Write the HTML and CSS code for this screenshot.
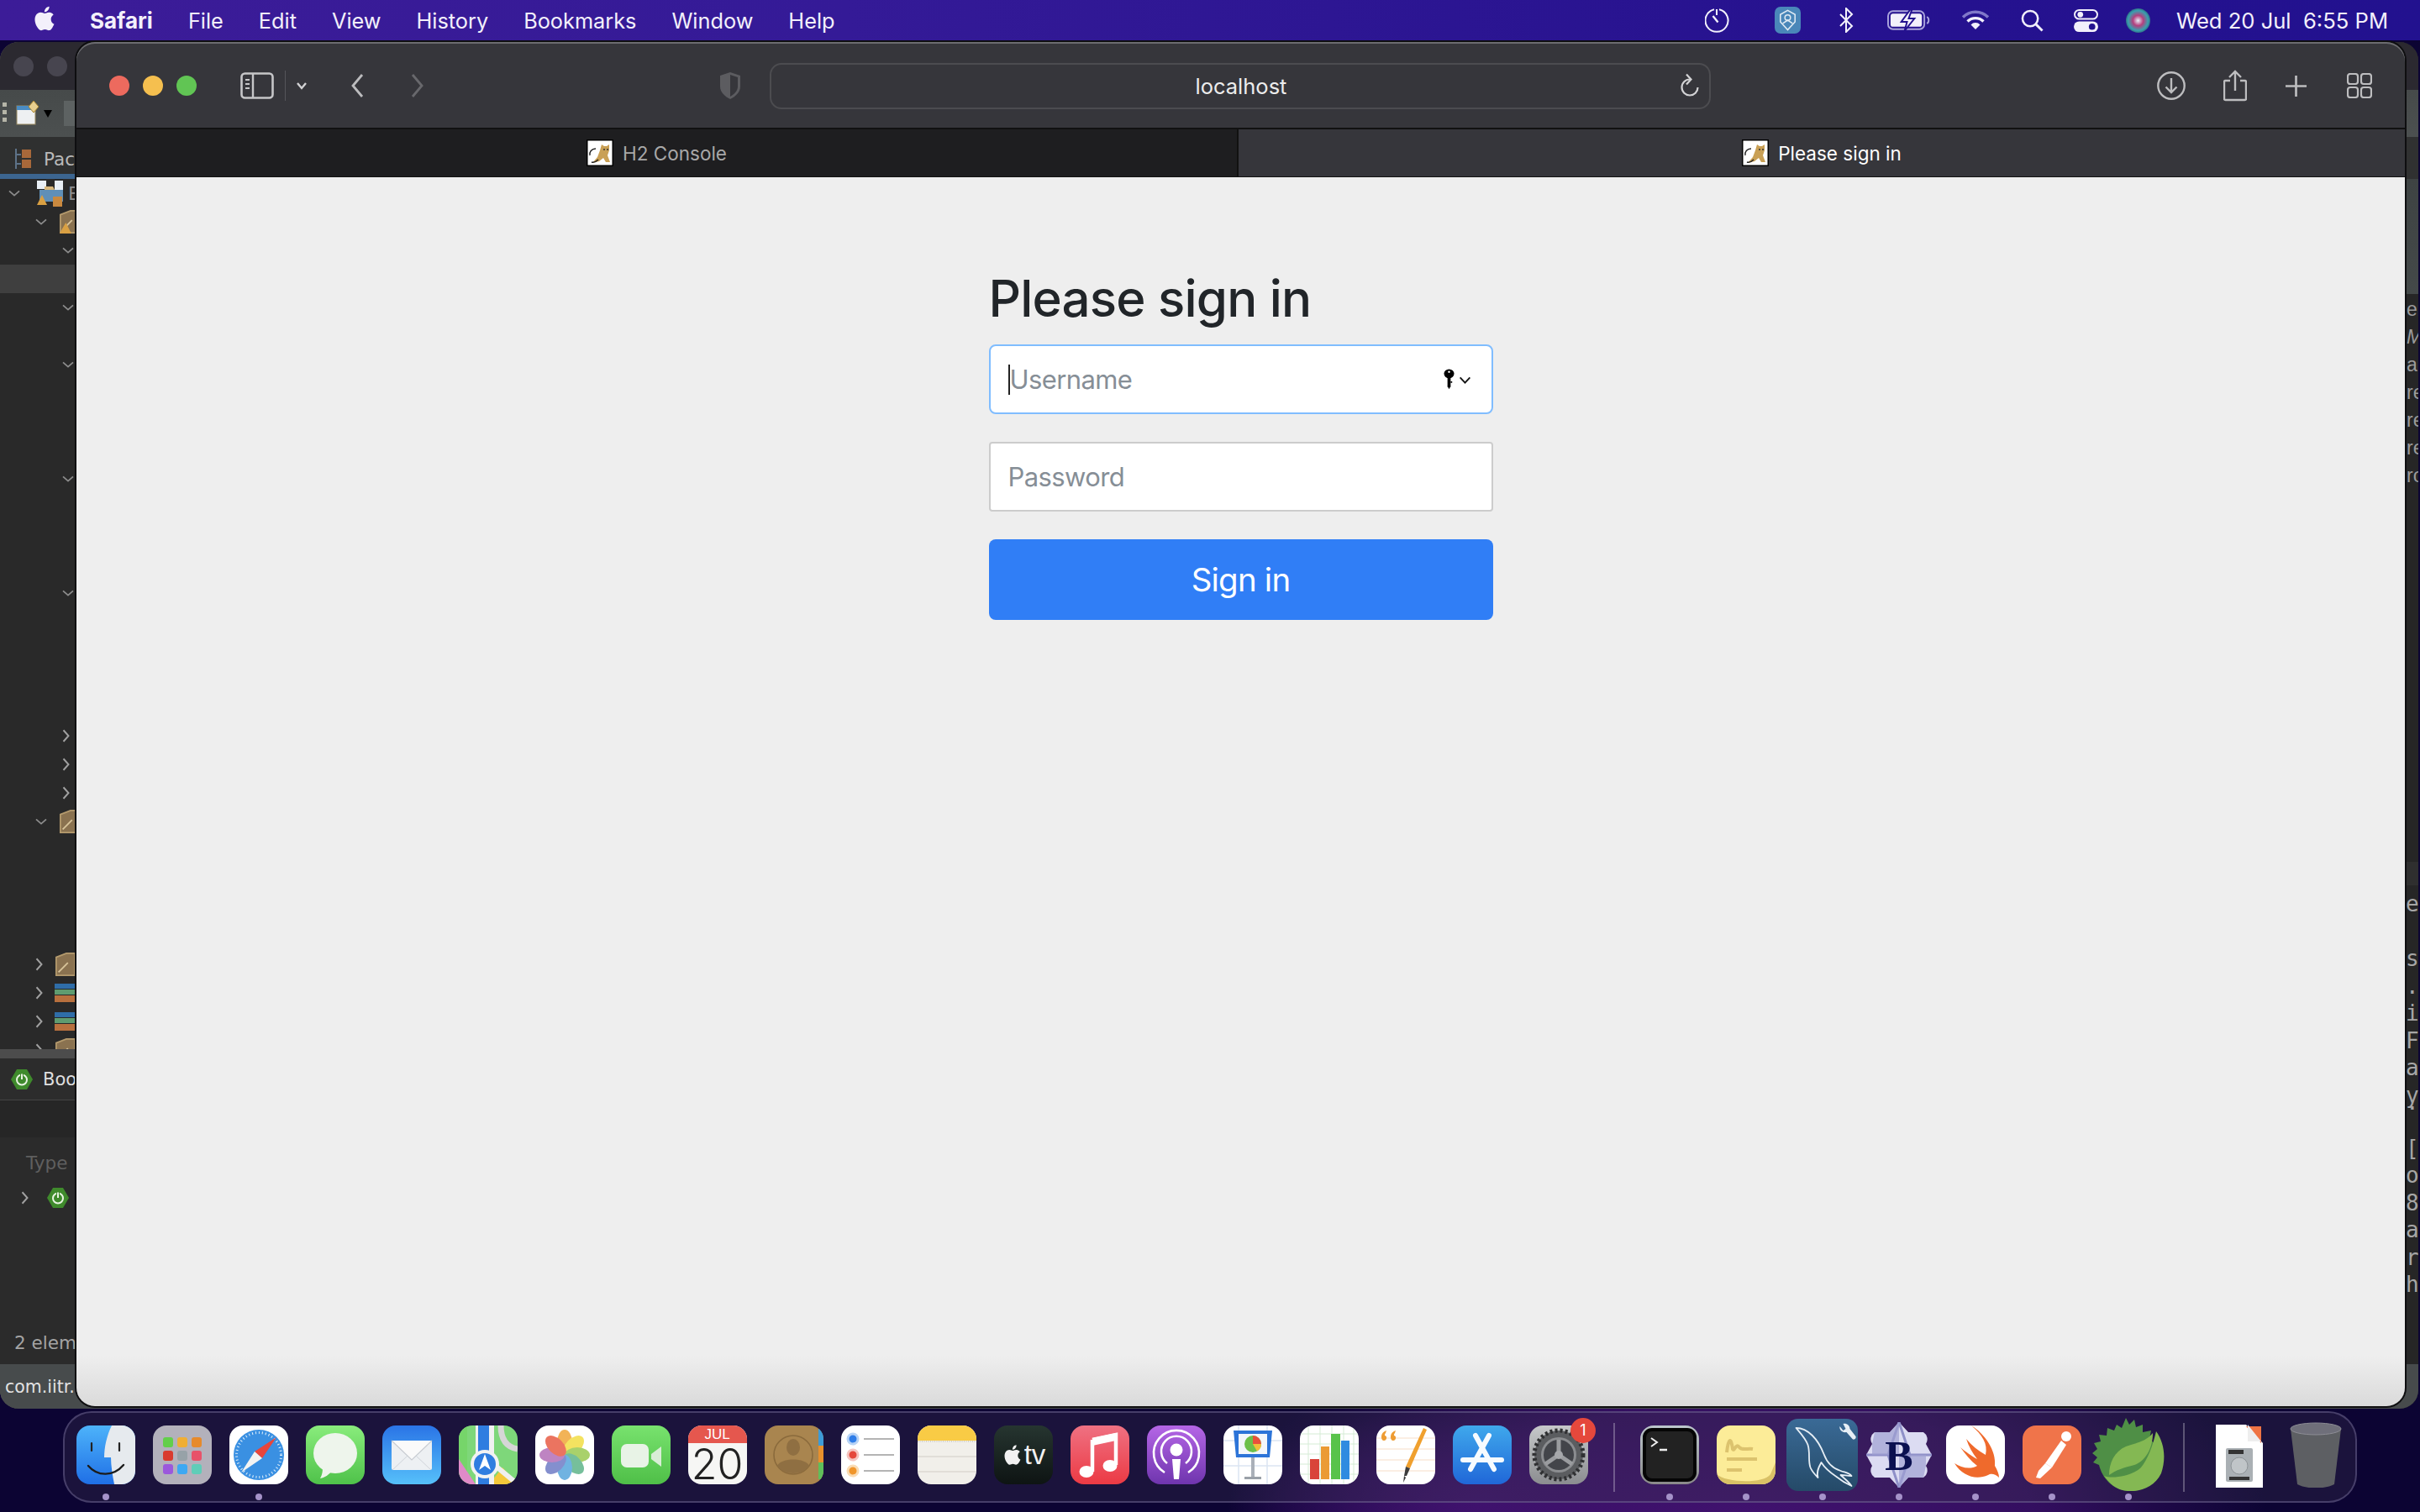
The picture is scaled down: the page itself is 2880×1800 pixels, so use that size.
FILE: index.html
```html
<!DOCTYPE html>
<html lang="en">
<head>
<meta charset="utf-8">
<title>Please sign in</title>
<link rel="stylesheet" href="styles.css">
</head>
<body class="desktop">
<svg class="sprite" aria-hidden="true">
  <symbol id="apple" viewBox="0 0 24 24"><path d="M18.71 19.5c-.83 1.24-1.71 2.45-3.05 2.47-1.34.03-1.77-.79-3.29-.79-1.53 0-2 .77-3.27.82-1.31.05-2.3-1.32-3.14-2.53C4.25 17 2.94 12.45 4.7 9.39c.87-1.52 2.43-2.48 4.12-2.51 1.28-.02 2.5.87 3.29.87.78 0 2.26-1.07 3.8-.91.65.03 2.47.26 3.64 1.98-.09.06-2.17 1.28-2.15 3.81.03 3.02 2.65 4.03 2.68 4.04-.03.07-.42 1.44-1.38 2.83M13 3.5c.73-.83 1.94-1.46 2.94-1.5.13 1.17-.34 2.35-1.04 3.19-.69.85-1.83 1.51-2.95 1.42-.15-1.15.41-2.35 1.05-3.11z"/></symbol>
  <symbol id="chev-d" viewBox="0 0 24 14"><path d="M3 3l9 8 9-8" fill="none" stroke="#8c8c8c" stroke-width="2.6"/></symbol>
  <symbol id="chev-r" viewBox="0 0 14 24"><path d="M3 3l8 9-8 9" fill="none" stroke="#a0a0a0" stroke-width="2.6"/></symbol>
  <symbol id="tomcat" viewBox="0 0 32 32"><rect width="32" height="32" fill="#fff"/><rect x=".75" y=".75" width="30.500" height="30.500" fill="none" stroke="#000" stroke-width="1.500"/><path d="M18 6l3 2 3 0 3-2 0 7-2 6 3 8h-5l-3-5-5 4-8 2 6-7 3-8z" fill="#c9a055"/><path d="M4 19c-1-4 2-8 7-8M6 27c3 1 6-1 8-3" fill="none" stroke="#222" stroke-width="1.400"/><circle cx="21" cy="12" r="1" fill="#333"/><circle cx="25" cy="12" r="1" fill="#333"/></symbol>
  <symbol id="hex" viewBox="0 0 26 26"><path d="M7 1h12l7 12-7 12H7L0 13z" fill="#3f8a2c"/><circle cx="13" cy="13.500" r="6" fill="none" stroke="#e8f3e2" stroke-width="2"/><path d="M13 6v7" stroke="#3f8a2c" stroke-width="4"/><path d="M13 6.500v6.500" stroke="#e8f3e2" stroke-width="2"/></symbol>
  <symbol id="folder" viewBox="0 0 26 30"><path d="M1 6l13-5h11v28H1z" fill="#8a7250" stroke="#b49a6d" stroke-width="2"/><path d="M4 25L16 13" stroke="#d8c49a" stroke-width="2"/></symbol>
  <symbol id="books" viewBox="0 0 26 26"><rect y="2" width="26" height="6" fill="#2f6da8"/><rect y="9" width="26" height="6" fill="#5f9c70"/><rect y="16" width="26" height="8" fill="#b8703e"/></symbol>
</svg>

<header class="menubar">
  <nav class="menu-left">
    <svg class="apple-logo" viewBox="0 0 24 24"><use href="#apple"/></svg>
    <span class="menu-app">Safari</span>
    <span>File</span><span>Edit</span><span>View</span><span>History</span><span>Bookmarks</span><span>Window</span><span>Help</span>
  </nav>
  <div class="menu-right">
    <svg class="st st-timer" viewBox="0 0 30 32"><path d="M11 3.200a13.500 13.500 0 1 0 6 0" fill="none" stroke="#f2f0fb" stroke-width="2"/><path d="M14 3v7" stroke="#f2f0fb" stroke-width="2"/><path d="M9.500 11l6 7.500" stroke="#f2f0fb" stroke-width="2.400"/></svg>
    <span class="st st-app"><svg viewBox="0 0 32 32"><path d="M16 4l9 5v9l-9 10-9-10V9z" fill="none" stroke="#dfeaf3" stroke-width="1.600"/><circle cx="16" cy="13" r="3.400" fill="none" stroke="#dfeaf3" stroke-width="1.600"/><path d="M10 20l6-4 6 4" fill="none" stroke="#dfeaf3" stroke-width="1.600"/></svg></span>
    <svg class="st st-bt" viewBox="0 0 18 30"><path d="M2 8l14 14-7 7V1l7 7L2 22" fill="none" stroke="#f2f0fb" stroke-width="2"/></svg>
    <svg class="st st-bat" viewBox="0 0 52 24"><rect x="1" y="1" width="44" height="22" rx="6" fill="none" stroke="#a9a3dc" stroke-width="2"/><rect x="4" y="4" width="38" height="16" rx="3" fill="#f2f0fb"/><path d="M48 8c3 1 3 7 0 8" fill="none" stroke="#a9a3dc" stroke-width="2"/><path d="M28 -1L17 14h7l-3 11 12-15h-7l4-11z" fill="#f2f0fb" stroke="#23128f" stroke-width="2"/></svg>
    <svg class="st st-wifi" viewBox="0 0 34 24"><path d="M2 8.500a21 21 0 0 1 30 0" fill="none" stroke="#8078c9" stroke-width="3.400"/><path d="M7.500 13.500a13.500 13.500 0 0 1 19 0" fill="none" stroke="#f2f0fb" stroke-width="3.400"/><path d="M11.500 17.500L17 23l5.500-5.500a7.500 7.500 0 0 0-11 0z" fill="#f2f0fb"/></svg>
    <svg class="st st-search" viewBox="0 0 28 28"><circle cx="11.500" cy="11.500" r="9.500" fill="none" stroke="#f2f0fb" stroke-width="2.600"/><path d="M18 18l8.500 8.500" stroke="#f2f0fb" stroke-width="3"/></svg>
    <svg class="st st-cc" viewBox="0 0 30 28"><rect x="1" y="1" width="28" height="11" rx="5.500" fill="none" stroke="#f2f0fb" stroke-width="2"/><circle cx="8" cy="6.500" r="3.500" fill="#f2f0fb"/><rect y="15" width="30" height="13" rx="6.500" fill="#f2f0fb"/><circle cx="22.500" cy="21.500" r="4" fill="#23128f"/></svg>
    <span class="st st-siri"></span>
    <span class="clock">Wed 20 Jul&nbsp;&nbsp;6:55 PM</span>
  </div>
</header>

<main class="windows">
  <section class="eclipse">
    <div class="ec-title"><i class="ec-dot"></i><i class="ec-dot"></i></div>
    <div class="ec-toolbar">
      <span class="ec-grip"></span>
      <svg class="ec-new" viewBox="0 0 28 30"><rect x="1" y="6" width="22" height="22" fill="#eef0f2" stroke="#9a8a60"/><rect x="1" y="6" width="22" height="5" fill="#4a8cc4"/><path d="M21 0l6 7-6 7-6-7z" fill="#e8cf8f" stroke="#a8842f"/></svg>
      <span class="ec-caret"></span>
      <span class="ec-tb-box"></span>
    </div>
    <div class="ec-main">
      <div class="ec-left">
        <div class="ec-tab"><svg class="ec-pkg" viewBox="0 0 20 26"><path d="M1 1v24M1 8h6M1 19h6" stroke="#5d7288" stroke-width="2" fill="none"/><rect x="8" y="2" width="11" height="10" fill="#a8683a"/><rect x="8" y="14" width="11" height="10" fill="#a8683a"/></svg><span>Pac</span></div>
        <div class="ec-blue"></div>
        <div class="tree">
          <div class="row l0"><svg class="cd"><use href="#chev-d"/></svg><svg class="mj" viewBox="0 0 32 32"><rect x="0" y="1" width="11" height="10" fill="#e8eef5"/><rect x="21" y="1" width="10" height="12" fill="#e8eef5"/><rect x="3" y="12" width="28" height="14" fill="#5f8fb8"/><path d="M9 8h10l2 4H9z" fill="#d8b67a"/><path d="M6 18l6 12H0z" fill="#d9a043"/><rect x="19" y="20" width="11" height="12" fill="#c9893f"/></svg><span class="row-text">E</span></div>
          <div class="row l1"><svg class="cd"><use href="#chev-d"/></svg><svg class="ti" viewBox="0 0 26 30"><use href="#folder"/><path d="M8 16l7 14H0z" fill="#d9a043"/></svg></div>
          <div class="row l2"><svg class="cd"><use href="#chev-d"/></svg></div>
          <div class="row sel"></div>
          <div class="row l2"><svg class="cd"><use href="#chev-d"/></svg></div>
          <div class="row"></div>
          <div class="row l2"><svg class="cd"><use href="#chev-d"/></svg></div>
          <div class="row"></div><div class="row"></div><div class="row"></div>
          <div class="row l2"><svg class="cd"><use href="#chev-d"/></svg></div>
          <div class="row"></div><div class="row"></div><div class="row"></div>
          <div class="row l2"><svg class="cd"><use href="#chev-d"/></svg></div>
          <div class="row"></div><div class="row"></div><div class="row"></div><div class="row"></div>
          <div class="row l2"><svg class="cr"><use href="#chev-r"/></svg></div>
          <div class="row l2"><svg class="cr"><use href="#chev-r"/></svg></div>
          <div class="row l2"><svg class="cr"><use href="#chev-r"/></svg></div>
          <div class="row l1"><svg class="cd"><use href="#chev-d"/></svg><svg class="ti" viewBox="0 0 26 30"><use href="#folder"/></svg></div>
          <div class="row"></div><div class="row"></div><div class="row"></div><div class="row"></div>
          <div class="row l1"><svg class="cr"><use href="#chev-r"/></svg><svg class="ti" viewBox="0 0 26 30"><use href="#folder"/></svg></div>
          <div class="row l1"><svg class="cr"><use href="#chev-r"/></svg><svg class="ti" viewBox="0 0 26 26"><use href="#books"/></svg></div>
          <div class="row l1"><svg class="cr"><use href="#chev-r"/></svg><svg class="ti" viewBox="0 0 26 26"><use href="#books"/></svg></div>
          <div class="row l1"><svg class="cr"><use href="#chev-r"/></svg><svg class="ti" viewBox="0 0 26 30"><use href="#folder"/></svg></div>
        </div>
        <div class="ec-sash"></div>
        <div class="ec-boot"><svg class="hexi" viewBox="0 0 26 26"><use href="#hex"/></svg><span>Boo</span></div>
        <div class="ec-band"></div>
        <div class="ec-dash">
          <div class="ec-type">Type</div>
          <div class="ec-item"><svg class="cr"><use href="#chev-r"/></svg><svg class="hexi" viewBox="0 0 26 26"><use href="#hex"/></svg></div>
          <div class="ec-count">2 elem</div>
        </div>
      </div>
      <div class="ec-right">
        <div class="ec-r-tab"></div>
        <div class="ec-r-head"></div>
        <div class="ec-r-code">
          <div>er</div><div class="it">Ma</div><div>ar</div><div>re</div><div>re</div><div>re</div><div>ro</div>
        </div>
        <div class="ec-r-band"></div>
        <div class="ec-r-console">
          <div>e</div><div>&nbsp;</div><div>s</div><div>.</div><div>i</div><div>F</div><div>a</div><div>y</div><div class="tight">.</div><div>[</div><div>o</div><div>8</div><div>a</div><div>r</div><div>h</div>
        </div>
      </div>
    </div>
    <div class="ec-status">com.iitr.</div>
  </section>

  <section class="safari">
    <div class="sf-toolbar">
      <div class="lights"><i class="red"></i><i class="yellow"></i><i class="green"></i></div>
      <svg class="sf-sidebar" viewBox="0 0 40 32"><rect x="1.500" y="1.500" width="37" height="29" rx="4" fill="none" stroke="#c6c6c8" stroke-width="2.600"/><path d="M15 2v28" stroke="#c6c6c8" stroke-width="2.400"/><path d="M6 9h5M6 14h5M6 19h5" stroke="#c6c6c8" stroke-width="2"/></svg>
      <span class="sf-vline"></span>
      <svg class="sf-drop" viewBox="0 0 14 10"><path d="M2 2l5 6 5-6" fill="none" stroke="#d2d2d4" stroke-width="2.400"/></svg>
      <svg class="sf-back" viewBox="0 0 16 30"><path d="M14 2L3 15l11 13" fill="none" stroke="#bcbcbe" stroke-width="2.800"/></svg>
      <svg class="sf-fwd" viewBox="0 0 16 30"><path d="M2 2l11 13L2 28" fill="none" stroke="#68686c" stroke-width="2.800"/></svg>
      <svg class="sf-shield" viewBox="0 0 26 34"><path d="M13 1l12 4v13c0 7-6 12-12 15C7 30 1 25 1 18V5z" fill="#5c5c60"/><path d="M13 4v26c5-3 9-7 9-12V7z" fill="#36363b"/></svg>
      <div class="sf-address">
        <span class="sf-host">localhost</span>
        <svg class="sf-reload" viewBox="0 0 22 28"><path d="M11 7.500A9.500 9.500 0 1 0 20.500 17" fill="none" stroke="#d2d2d4" stroke-width="2.200"/><path d="M7 1.500l5.500 6-5.500 6" fill="none" stroke="#d2d2d4" stroke-width="2.200"/></svg>
      </div>
      <div class="sf-actions">
        <svg class="sf-dl" viewBox="0 0 34 34"><circle cx="17" cy="17" r="15.700" fill="none" stroke="#bdbdbf" stroke-width="2.400"/><path d="M17 8v17M10.500 18.500l6.500 6.500 6.500-6.500" fill="none" stroke="#bdbdbf" stroke-width="2.400"/></svg>
        <svg class="sf-share" viewBox="0 0 28 38"><path d="M8 13H2.500a1.500 1.500 0 0 0-1.500 1.500v20A1.500 1.500 0 0 0 2.500 36h23a1.500 1.500 0 0 0 1.500-1.500v-20a1.500 1.500 0 0 0-1.500-1.500H20" fill="none" stroke="#bdbdbf" stroke-width="2.400"/><path d="M14 25V2M7 9l7-7 7 7" fill="none" stroke="#bdbdbf" stroke-width="2.400"/></svg>
        <svg class="sf-plus" viewBox="0 0 28 28"><path d="M14 1v26M1 14h26" stroke="#bdbdbf" stroke-width="2.800"/></svg>
        <svg class="sf-tabs" viewBox="0 0 30 30"><rect x="1" y="1" width="12" height="12" rx="3" fill="none" stroke="#bdbdbf" stroke-width="2.200"/><rect x="17" y="1" width="12" height="12" rx="3" fill="none" stroke="#bdbdbf" stroke-width="2.200"/><rect x="1" y="17" width="12" height="12" rx="3" fill="none" stroke="#bdbdbf" stroke-width="2.200"/><rect x="17" y="17" width="12" height="12" rx="3" fill="none" stroke="#bdbdbf" stroke-width="2.200"/></svg>
      </div>
    </div>
    <div class="sf-tabbar">
      <div class="sf-tab inactive"><svg class="fav" viewBox="0 0 32 32"><use href="#tomcat"/></svg><span>H2 Console</span></div>
      <div class="sf-tab active"><svg class="fav" viewBox="0 0 32 32"><use href="#tomcat"/></svg><span>Please sign in</span></div>
    </div>
    <div class="page">
      <form class="signin">
        <h1>Please sign in</h1>
        <div class="field focused"><i class="caret"></i><span class="ph">Username</span>
          <svg class="key" viewBox="0 0 14 30" preserveAspectRatio="none"><circle cx="7" cy="7" r="6.500"/><rect x="5" y="12" width="4" height="14"/><path d="M5 25l2 4 2-4zM9 18h2v2H9z"/><circle cx="7" cy="4.500" r="1.400" fill="#fff"/></svg>
          <svg class="keydrop" viewBox="0 0 16 10"><path d="M1.500 1.500L8 8.500l6.500-7" fill="none" stroke="#111" stroke-width="2"/></svg>
        </div>
        <div class="field"><span class="ph">Password</span></div>
        <button class="btn" type="button">Sign in</button>
      </form>
    </div>
  </section>
</main>

<nav class="dock">
  <div class="slot on"><div class="app finder"><svg viewBox="0 0 70 70"><path d="M42 0c-6 12-9 26-9 38 3 0 6 0 8 0 0 10 2 22 4 32h25V0z" fill="#e6eaee"/><path d="M18 21v9M51 21v9" stroke="#222" stroke-width="2.200" stroke-linecap="round"/><path d="M14 48c11 13 30 13 42-1" fill="none" stroke="#1c1c1c" stroke-width="2.400" stroke-linecap="round"/></svg></div><i class="dot"></i></div>
  <div class="slot"><div class="app launch"><svg viewBox="0 0 70 70"><g><rect x="12" y="14" width="12" height="12" rx="3" fill="#62cf4a"/><rect x="29" y="14" width="12" height="12" rx="3" fill="#f0ae35"/><rect x="46" y="14" width="12" height="12" rx="3" fill="#e68a2c"/><rect x="12" y="30" width="12" height="12" rx="3" fill="#d93a2e"/><rect x="29" y="30" width="12" height="12" rx="3" fill="#97a2a8"/><rect x="46" y="30" width="12" height="12" rx="3" fill="#e8526a"/><rect x="12" y="46" width="12" height="12" rx="3" fill="#9b58dc"/><rect x="29" y="46" width="12" height="12" rx="3" fill="#3da8f2"/><rect x="46" y="46" width="12" height="12" rx="3" fill="#5fcdb8"/></g></svg></div></div>
  <div class="slot on"><div class="app safari-ic"><svg viewBox="0 0 70 70"><circle cx="35" cy="35" r="30" fill="#3a90e2"/><circle cx="35" cy="35" r="26.500" fill="none" stroke="#e2f0fb" stroke-width="3" stroke-dasharray="1 3"/><path d="M56 14L30 31l9 8z" fill="#e8453c"/><path d="M14 56l16-25 9 8z" fill="#f3f3f3"/></svg></div><i class="dot"></i></div>
  <div class="slot"><div class="app messages"><svg viewBox="0 0 70 70"><ellipse cx="35" cy="33" rx="26" ry="24" fill="#eef5ec"/><path d="M20 50c0 6-1 9-3 13 6-1 11-5 14-9z" fill="#eef5ec"/></svg></div></div>
  <div class="slot"><div class="app mail"><svg viewBox="0 0 70 70"><rect x="11" y="18" width="48" height="35" rx="2" fill="#edf0f3"/><path d="M11 18l24 23 24-23" fill="#fafafa" stroke="#c8ccd2" stroke-width="1.200"/><path d="M12 53l18-17M58 53L40 36" stroke="#cfd3d9" stroke-width="1"/></svg></div></div>
  <div class="slot"><div class="app maps"><svg viewBox="0 0 70 70"><path d="M0 0h10v70H0z" fill="#76d56a"/><path d="M0 40l20 30H0z" fill="#e08ac8"/><path d="M36 70l16-20 18 20z" fill="#f4c83a"/><path d="M22 0h14v70H22z" fill="#2f7de0"/><path d="M36 0h6v70h-6z" fill="#f1f1f1"/><path d="M20 0h3v70h-3z" fill="#f1f1f1"/><path d="M50 0c0 18 8 26 20 28" fill="none" stroke="#d6d6d6" stroke-width="7"/><path d="M34 40l36 30" stroke="#efefef" stroke-width="6"/><circle cx="31" cy="46" r="17" fill="#f2f2f2"/><circle cx="31" cy="46" r="13" fill="#2f7de0"/><path d="M31 34l7 19-7-5-7 5z" fill="#fff"/></svg></div></div>
  <div class="slot"><div class="app photos"><svg viewBox="0 0 70 70"><g opacity=".85"><ellipse cx="35" cy="20" rx="9" ry="15" fill="#f0a63a"/><ellipse cx="35" cy="20" rx="9" ry="15" fill="#f2dd45" transform="rotate(45 35 35)"/><ellipse cx="35" cy="20" rx="9" ry="15" fill="#9bc952" transform="rotate(90 35 35)"/><ellipse cx="35" cy="20" rx="9" ry="15" fill="#5fb48a" transform="rotate(135 35 35)"/><ellipse cx="35" cy="20" rx="9" ry="15" fill="#58a6dc" transform="rotate(180 35 35)"/><ellipse cx="35" cy="20" rx="9" ry="15" fill="#6f7cc6" transform="rotate(225 35 35)"/><ellipse cx="35" cy="20" rx="9" ry="15" fill="#b36fb8" transform="rotate(270 35 35)"/><ellipse cx="35" cy="20" rx="9" ry="15" fill="#e85c45" transform="rotate(315 35 35)"/></g></svg></div></div>
  <div class="slot"><div class="app facetime"><svg viewBox="0 0 70 70"><rect x="11" y="22" width="33" height="28" rx="7" fill="#e8f3e6"/><path d="M47 34l12-9v24l-12-9z" fill="#d9edd6"/></svg></div></div>
  <div class="slot"><div class="app calendar"><div class="cal-month">JUL</div><div class="cal-day">20</div></div></div>
  <div class="slot"><div class="app contacts"><svg viewBox="0 0 70 70"><rect x="64" y="4" width="6" height="20" fill="#3d9bd8"/><rect x="64" y="24" width="6" height="20" fill="#e8902c"/><rect x="64" y="44" width="6" height="20" fill="#5fbf5a"/><circle cx="34" cy="35" r="23" fill="none" stroke="#8a6a3c" stroke-width="1.600"/><ellipse cx="34" cy="26" rx="8" ry="10" fill="#8f6f42"/><path d="M15 48c4-10 34-10 38 0-8 12-30 12-38 0z" fill="#8f6f42"/></svg></div></div>
  <div class="slot"><div class="app reminders"><svg viewBox="0 0 70 70"><circle cx="14" cy="16" r="6" fill="#2f7de8" stroke="#b8d3f5" stroke-width="3"/><circle cx="14" cy="35" r="6" fill="#e5483c" stroke="#f5c5c0" stroke-width="3"/><circle cx="14" cy="54" r="6" fill="#f0962c" stroke="#fadcb5" stroke-width="3"/><path d="M27 16h36M27 35h36M27 54h36" stroke="#b4b4b4" stroke-width="1.800"/></svg></div></div>
  <div class="slot"><div class="app notes"><svg viewBox="0 0 70 70"><rect width="70" height="18" fill="#f9cb45"/><path d="M0 19h70" stroke="#c9c5ba" stroke-width="1.500" stroke-dasharray="1 1.500"/><path d="M0 37h70M0 55h70" stroke="#dcd9d2" stroke-width="1.500"/></svg></div></div>
  <div class="slot"><div class="app tv"><svg class="tv-apple" viewBox="0 0 24 24"><use href="#apple"/></svg><span>tv</span></div></div>
  <div class="slot"><div class="app music"><svg viewBox="0 0 70 70"><path d="M26 17l28-6v36" fill="none" stroke="#fff" stroke-width="4.500"/><path d="M26 17v38" stroke="#fff" stroke-width="4.500"/><path d="M26 15l28-6v9l-28 6z" fill="#fff"/><ellipse cx="19" cy="55" rx="8.500" ry="7" fill="#fff"/><ellipse cx="47" cy="48" rx="8.500" ry="7" fill="#fff"/></svg></div></div>
  <div class="slot"><div class="app podcasts"><svg viewBox="0 0 70 70"><path d="M21 56a27 27 0 1 1 28 0" fill="none" stroke="#fff" stroke-width="2.600"/><path d="M24 45a18 18 0 1 1 22 0" fill="none" stroke="#fff" stroke-width="2.600"/><circle cx="35" cy="29" r="7.500" fill="#fff"/><path d="M30 40h10l-2 24h-6z" fill="#fff"/></svg></div></div>
  <div class="slot"><div class="app keynote"><svg viewBox="0 0 70 70"><path d="M0 18h70M0 48h70M18 0v70M52 0v70" stroke="#dbe5f2" stroke-width="1.500" fill="none"/><path d="M12 6h46l-3 32H15z" fill="#2c74d8"/><rect x="18" y="10" width="34" height="24" fill="#f2f6fb"/><circle cx="35" cy="22" r="10" fill="#6cc04a"/><path d="M35 12a10 10 0 0 1 10 10H35z" fill="#e8503c"/><path d="M35 22h10a10 10 0 0 1-5 8.700z" fill="#f0c03a"/><rect x="33" y="38" width="4" height="24" fill="#aab0b8"/><rect x="25" y="61" width="20" height="3" fill="#9aa0a8"/></svg></div></div>
  <div class="slot"><div class="app numbers"><svg viewBox="0 0 70 70"><path d="M0 10h70M0 22h70M0 34h70M0 46h70M0 58h70M10 0v70M24 0v70M38 0v70M52 0v70M64 0v70" stroke="#d5ecd5" stroke-width="1" fill="none"/><rect x="12" y="40" width="11" height="24" fill="#d9443a"/><rect x="25" y="25" width="10" height="39" fill="#eb9b35"/><rect x="37" y="10" width="11" height="54" fill="#58c34a"/><rect x="49" y="18" width="10" height="46" fill="#2f8be0"/></svg></div></div>
  <div class="slot"><div class="app pages"><svg viewBox="0 0 70 70"><path d="M0 15h70M0 28h70M0 41h70M0 54h70" stroke="#f7ddc8" stroke-width="1"/><path d="M6 14c0-5 3-7 6-8l-1 3c-1 1-1 2-1 3 3 0 3 6-1 6-2 0-3-2-3-4zM17 14c0-5 3-7 6-8l-1 3c-1 1-1 2-1 3 3 0 3 6-1 6-2 0-3-2-3-4z" fill="#ee9c33"/><path d="M56 3l4 2-20 46-5-2z" fill="#f0a02e"/><path d="M35 49l5 2-4 9-3 0z" fill="#3d3d3d"/><path d="M33 60l-1 8 3-6z" fill="#333"/></svg></div></div>
  <div class="slot"><div class="app appstore"><svg viewBox="0 0 70 70"><path d="M27 12l22 40M43 12L21 52" stroke="#f6fbff" stroke-width="6" stroke-linecap="round"/><path d="M12 41h46" stroke="#f6fbff" stroke-width="6" stroke-linecap="round"/></svg></div></div>
  <div class="slot"><div class="app sysprefs"><svg viewBox="0 0 70 70"><circle cx="35" cy="35" r="29" fill="#5b5d60"/><circle cx="35" cy="35" r="29" fill="none" stroke="#2f3032" stroke-width="5" stroke-dasharray="3 3"/><circle cx="35" cy="35" r="21" fill="#8b8d90"/><circle cx="35" cy="35" r="18" fill="#43454a"/><path d="M35 35V17M35 35L19 46M35 35l16 11" stroke="#9a9c9f" stroke-width="5"/><circle cx="35" cy="35" r="5" fill="#a6a8ab"/></svg></div><b class="badge">1</b></div>
  <span class="dock-sep"></span>
  <div class="slot on"><div class="app terminal"><svg viewBox="0 0 70 70"><rect x="3" y="3" width="64" height="64" rx="11" fill="#050505"/><rect x="7" y="7" width="56" height="56" rx="7" fill="#222"/><path d="M13 15l7 5-7 5" fill="none" stroke="#eee" stroke-width="2"/><path d="M23 29h9" stroke="#eee" stroke-width="2.400"/></svg></div><i class="dot"></i></div>
  <div class="slot on"><div class="app stickies"><svg viewBox="0 0 70 70"><path d="M0 58c10 10 56 12 64 0l6-14v10c0 9-6 16-14 16H14C6 70 0 66 0 58z" fill="#d9c166"/><path d="M12 32c2-18 5-18 7-4 2 4 4-8 8-2 3 4 10 1 16 2M12 40h36M12 53h18" fill="none" stroke="#dcc36e" stroke-width="4"/></svg></div><i class="dot"></i></div>
  <div class="slot on"><div class="bigic mysql"><svg viewBox="0 0 84 86"><path d="M11 11c14 0 26 13 33 31 4 11 10 17 20 20 5 2 10 2 13 6-5 0-9-1-13-1 4 4 9 7 13 13-7-3-13-7-18-11-6-4-13-9-18-17-4 7-6 12-4 18-3-3-7-7-9-12-3-9 0-17-3-27-3-8-8-13-14-20z" fill="none" stroke="#e6eef5" stroke-width="1.800" stroke-linejoin="round"/><path d="M63 9l4 5 3-2-3-6c4-1 8 2 8 6l7 9c1 2-2 5-4 3l-7-8c-5 1-9-3-8-7z" fill="#e6eef5"/></svg></div><i class="dot"></i></div>
  <div class="slot on"><div class="bigic bbedit"><svg viewBox="0 0 78 78"><path d="M39 0l11 12h18a10 10 0 0 1 3 14l7 13-7 13a10 10 0 0 1-3 14H50L39 78 28 66H10a10 10 0 0 1-3-14L0 39l7-13a10 10 0 0 1 3-14h18z" fill="#dcdcf2"/><path d="M39 0l13 39-13 39-13-39zM0 39h78" fill="none" stroke="#8f90c8" stroke-width="3"/><path d="M10 12h18L39 0v39H7V26zM68 66H50L39 78V39h32v13z" fill="#9e9fd2" opacity=".7"/><text x="39" y="57" text-anchor="middle" class="bb-letter">B</text></svg></div><i class="dot"></i></div>
  <div class="slot on"><div class="app swift"><svg viewBox="0 0 70 70"><path d="M30 0c16 10 30 30 28 48 3 5 5 10 5 14-5-5-10-5-13-3-14 6-30 2-40-14 8 5 18 8 27 3-8-6-14-14-20-22 6 5 14 11 20 14-6-8-10-15-13-24 7 8 14 14 23 19 3-13-4-24-17-35z" fill="#ef6a2c"/></svg></div><i class="dot"></i></div>
  <div class="slot on"><div class="app postman"><svg viewBox="0 0 70 70"><circle cx="52" cy="13" r="6" fill="#fff"/><path d="M46 18L27 45l8 5 17-27z" fill="#fff"/><path d="M27 45l-8 9-3 8 5 1 14-13z" fill="#fff"/></svg></div><i class="dot"></i></div>
  <div class="slot on"><div class="bigic spring"><svg viewBox="0 0 86 88"><path d="M40 0l4 8 6-6 2 9 8-3v9l10-2-2 10C82 36 86 50 80 66 72 82 56 88 42 87 24 85 12 72 8 56l-7-3 5-6-6-5 6-5-4-7 8-2-2-8 9 1 1-9 8 3 3-7 6 4z" fill="#4f8f46"/><path d="M76 16c10 14 12 32 6 50-8 16-24 22-40 21-14-1-22-10-28-18 10 4 34 0 44-10 8-10 14-26 18-43z" fill="#84b853"/><path d="M72 18c0 20-10 34-22 38-12 3-22 6-30 12 0-14 6-28 20-34 12-4 24-6 32-16z" fill="#84b853"/></svg></div><i class="dot"></i></div>
  <span class="dock-sep"></span>
  <div class="slot"><div class="bigic doc"><svg viewBox="0 0 56 75"><path d="M0 0h36l20 22v53H0z" fill="#fff"/><path d="M36 2l18 0 0 20z" fill="#ef7444"/><path d="M38 0l16 20H38z" fill="#eee"/><rect x="12" y="28" width="32" height="40" rx="2" fill="#aab0b4"/><rect x="15" y="30" width="18" height="5" fill="#333"/><circle cx="28" cy="49" r="10" fill="#c0c5c8" stroke="#8e9498"/><rect x="16" y="62" width="24" height="4" fill="#333"/></svg></div></div>
  <div class="slot"><div class="bigic trash"><svg viewBox="0 0 62 78"><path d="M1 8L9 74c10 6 34 6 44 0l8-66z" fill="#5d5f63"/><ellipse cx="31" cy="8" rx="30" ry="7" fill="#6f6f7a" stroke="#8d8d95"/></svg></div></div>
</nav>
</body>
</html>
```

FILE: styles.css
```css
* { box-sizing: border-box; }
html, body { margin: 0; padding: 0; }
.sprite { display: none; }
.desktop {
  width: 2880px; height: 1800px; overflow: hidden;
  display: flex; flex-direction: column;
  font-family: Inter, "Liberation Sans", sans-serif;
  background:
    radial-gradient(ellipse 620px 260px at 2080px 1810px, #41126f 0%, rgba(65,18,111,.75) 55%, rgba(65,18,111,0) 100%),
    radial-gradient(ellipse 300px 120px at 1760px 1790px, #3a1268 0%, rgba(58,18,104,0) 100%),
    #0c0433;
}

/* menu bar */
.menubar {
  height: 48px; flex: none; display: flex; justify-content: space-between; align-items: center;
  padding: 0 38px 0 40px; color: #f3f0fb;
  background: linear-gradient(90deg, #3c1c98 0%, #341a97 35%, #26128f 75%, #22118f 100%);
  font-size: 25.300px; font-weight: 400;
}
.menu-left { display: flex; align-items: center; gap: 42px; }
.apple-logo { width: 34px; height: 34px; fill: #f3f0fb; margin: -4px -5px 0 -4px; }
.menu-app { font-weight: 700; font-size: 26px; }
.menu-right { display: flex; align-items: center; }
.st { display: block; flex: none; }
.st-timer { width: 30px; height: 32px; margin-right: 53px; }
.st-app { width: 31px; height: 32px; margin-right: 45px; border-radius: 7px; background: #4a87b9; }
.st-app svg { display: block; width: 31px; height: 32px; }
.st-bt { width: 18px; height: 30px; margin-right: 40px; }
.st-bat { width: 51px; height: 24px; margin-right: 37px; }
.st-wifi { width: 34px; height: 24px; margin-right: 37px; }
.st-search { width: 27px; height: 27px; margin-right: 36px; }
.st-cc { width: 29px; height: 27px; margin-right: 33px; }
.st-siri {
  width: 29px; height: 29px; border-radius: 50%; margin-right: 31px;
  background: radial-gradient(circle at 50% 50%, #e8eef8 0%, #b4407e 30%, #38a0b0 58%, #2a3a58 85%, #7f8f9f 100%);
}
.clock { white-space: nowrap; font-size: 25.600px; }

/* windows */
.windows { position: relative; height: 1632px; flex: none; }
.eclipse {
  position: absolute; left: 0; top: 2px; width: 2878px; height: 1627px;
  border-radius: 22px; overflow: hidden; background: #292929;
  display: flex; flex-direction: column;
  box-shadow: inset 2px 0 0 #5b5b5b;
}
.ec-title { height: 57px; flex: none; background: #2b2930; display: flex; align-items: center; gap: 16px; padding-left: 16px; }
.ec-dot { width: 24px; height: 24px; border-radius: 50%; background: #47454f; }
.ec-toolbar {
  height: 56px; flex: none; display: flex; align-items: center; padding-left: 2px;
  background: linear-gradient(180deg, #464a4a, #4c5050);
}
.ec-grip { width: 5px; height: 26px; background: repeating-linear-gradient(180deg, #b5b5a8 0 5px, transparent 5px 9px); margin-left: 1px; }
.ec-new { width: 28px; height: 30px; margin-left: 11px; }
.ec-caret { width: 0; height: 0; margin-left: 5px; border-left: 5px solid transparent; border-right: 5px solid transparent; border-top: 9px solid #000; }
.ec-tb-box { width: 20px; height: 30px; background: #5d6262; margin-left: 14px; }
.ec-main { flex: 1; min-height: 0; display: flex; justify-content: space-between; }
.ec-left { width: 91px; flex: none; display: flex; flex-direction: column; box-shadow: inset 2px 0 0 #5b5b5b; }
.ec-tab { height: 44px; flex: none; display: flex; align-items: center; padding: 8px 0 0 18px; gap: 14px; background: #2f3030; color: #b9b9b9; font: 21.500px "DejaVu Sans", sans-serif; overflow: hidden; }
.ec-pkg { width: 20px; height: 26px; flex: none; }
.ec-blue { height: 6px; flex: none; background: #3c6590; }
.tree { height: 1036px; flex: none; overflow: hidden; background: #292929; }
.row { height: 34px; display: flex; align-items: center; overflow: hidden; }
.row.sel { background: #3f3f3f; }
.l0 { padding-left: 9px; }
.l1 { padding-left: 41px; }
.l2 { padding-left: 73px; }
.cd { width: 16px; height: 10px; flex: none; }
.cr { width: 11px; height: 18px; flex: none; }
.mj { width: 32px; height: 32px; margin-left: 19px; flex: none; }
.row-text { color: #8e8e8e; font: 22px "DejaVu Sans", sans-serif; margin-left: 5px; }
.ti { width: 26px; height: 28px; margin-left: 13px; flex: none; }
.ec-sash { height: 11px; flex: none; background: #4c4c4c; }
.ec-boot { height: 50px; flex: none; display: flex; align-items: center; padding-left: 13px; gap: 12px; background: #2c2c2c; color: #dfdfdf; font: 21px "DejaVu Sans", sans-serif; border-bottom: 1px solid #444; overflow: hidden; white-space: nowrap; }
.hexi { width: 26px; height: 26px; flex: none; }
.ec-band { height: 44px; flex: none; background: #262626; }
.ec-dash { flex: 1; min-height: 0; background: #2b2b2b; display: flex; flex-direction: column; padding-top: 18px; overflow: hidden; }
.ec-type { padding-left: 31px; color: #5f5f5f; font: 21.500px/26px "DejaVu Sans", sans-serif; white-space: nowrap; }
.ec-item { display: flex; align-items: center; margin-top: 15px; padding-left: 24px; gap: 21px; }
.ec-count { margin-top: auto; margin-bottom: 12px; padding-left: 17px; color: #a4a4a4; font: 21.500px/26px "DejaVu Sans", sans-serif; white-space: nowrap; }
.ec-status { height: 53px; flex: none; display: flex; align-items: center; padding-left: 6px; background: #474b4c; color: #e2e2e2; font: 20.500px "DejaVu Sans", sans-serif; }

.ec-right { width: 16px; flex: none; overflow: hidden; background: #262626; }
.ec-r-tab { height: 50px; background: #303131; }
.ec-r-head { height: 137px; background: linear-gradient(180deg, #3e4343, #444949); }
.ec-r-code { height: 676px; padding-top: 2px; color: #9b9b9b; font: 23px/33px "Liberation Sans", sans-serif; white-space: nowrap; padding-left: 2px; }
.ec-r-code .it { font-style: italic; }
.ec-r-band { height: 28px; background: #2f2f2f; }
.ec-r-console { padding: 6px 0 0 1px; color: #a6a6a6; font: 26px/32.500px "DejaVu Sans Mono", monospace; }
.ec-r-console .tight { margin-top: -24px; margin-bottom: 22px; }

.safari {
  position: absolute; left: 91px; top: 2px; width: 2771px; height: 1624px;
  border-radius: 22px; overflow: hidden; display: flex; flex-direction: column;
  background: #36363b; box-shadow: 0 0 0 2px #0e0e10, inset 0 2px 0 #6c6c70;
}
.sf-toolbar { height: 104px; flex: none; display: flex; align-items: center; padding-top: 2px; border-bottom: 2px solid #111; }
.lights { display: flex; gap: 16px; margin-left: 39px; }
.lights i { width: 24px; height: 24px; border-radius: 50%; }
.red { background: #ed6a5e; }
.yellow { background: #f5bf4f; }
.green { background: #61c554; }
.sf-sidebar { width: 40px; height: 32px; margin-left: 52px; }
.sf-vline { width: 1px; height: 36px; background: #55555a; margin-left: 13px; }
.sf-drop { width: 14px; height: 10px; margin-left: 12px; }
.sf-back { width: 16px; height: 30px; margin-left: 51px; }
.sf-fwd { width: 16px; height: 30px; margin-left: 56px; }
.sf-shield { width: 26px; height: 34px; margin-left: 351px; }
.sf-address {
  position: relative; width: 1120px; height: 55px; margin-left: 34px; border: 2px solid #4c4c50; border-radius: 14px;
  display: flex; align-items: center; justify-content: center; color: #ececec; font-size: 25.500px;
}
.sf-host { margin-left: 2px; }
.sf-reload { position: absolute; right: 12px; top: 10px; width: 22px; height: 28px; }
.sf-actions { display: flex; align-items: center; margin-left: 531px; }
.sf-dl { width: 34px; height: 34px; }
.sf-share { width: 28px; height: 38px; margin-left: 45px; }
.sf-plus { width: 27px; height: 27px; margin-left: 45px; }
.sf-tabs { width: 30px; height: 30px; margin-left: 47px; }
.sf-tabbar { height: 57px; flex: none; display: flex; font-size: 22.500px; border-bottom: 1px solid #111; }
.sf-tab { display: flex; align-items: center; justify-content: center; gap: 11px; }
.sf-tab.inactive { width: 1383px; background: #1e1e20; color: #a8a8a8; border-right: 2px solid #111; }
.sf-tab.active { flex: 1; color: #fff; background: #36363b; }
.fav { width: 32px; height: 32px; }

/* sign-in page */
.page { flex: 1; min-height: 0; background: linear-gradient(180deg, #eee 0, #eee calc(100% - 60px), #dadada 100%); }
.signin { width: 600px; margin: 0 auto; display: flex; flex-direction: column; padding-top: 108px; }
.signin h1 { margin: 0 0 19px; font-size: 60px; line-height: 72px; font-weight: 500; color: #212529; letter-spacing: -.8px; }
.field {
  position: relative; height: 83px; display: flex; align-items: center; padding-left: 21px;
  background: #fff; border: 2px solid #ccc; border-radius: 4px; margin-bottom: 33px;
  font-size: 31px; letter-spacing: -.6px; color: #868e96;
}
.field.focused { border-color: #80bdff; border-radius: 8px; }
.ph { line-height: 40px; }
.caret { width: 2px; height: 36px; background: #222; }
.key { position: absolute; right: 44px; top: 27px; width: 13px; height: 25px; fill: #000; }
.keydrop { position: absolute; right: 24px; top: 36px; width: 15px; height: 9px; }
.btn {
  height: 96px; border: 0; border-radius: 8px; background: #307ef6; color: #fff;
  font: 400 38.500px Inter, "Liberation Sans", sans-serif; letter-spacing: -.8px;
}

/* dock */
.dock {
  width: 2730px; height: 109px; flex: none; margin: 0 auto;
  display: flex; gap: 20px; padding: 15px 0 0 13px;
  border: 2px solid rgba(125,115,160,.45); border-radius: 34px;
  background: rgba(60,52,80,.32);
}
.slot { position: relative; width: 71px; flex: none; display: flex; flex-direction: column; align-items: center; height: 70px; }
.app { width: 70px; height: 70px; flex: none; border-radius: 16px; overflow: hidden; position: relative; }
.app svg { display: block; width: 100%; height: 100%; }
.bigic { flex: none; }
.bigic svg { display: block; width: 100%; height: 100%; }
.dot { position: absolute; left: 31.500px; top: 81px; width: 8px; height: 8px; border-radius: 50%; background: #a592c9; }
.dock-sep { width: 2px; height: 82px; flex: none; margin: -3px 9px 0 10px; background: rgba(255,255,255,.28); }
.finder { background: linear-gradient(180deg, #4db3fa, #1f6fe6); }
.launch { background: #b3b1bb; }
.safari-ic { background: #fff; }
.messages { background: linear-gradient(180deg, #89ec7c, #4fc24a); }
.mail { background: linear-gradient(180deg, #2a74e6, #56c0fa); }
.maps { background: #7ed77a; }
.photos { background: #fff; }
.facetime { background: linear-gradient(180deg, #78e26e, #4fbf48); }
.calendar { background: #f6f6f4; display: flex; flex-direction: column; align-items: center; }
.cal-month { width: 100%; height: 21px; background: #e5574e; color: #fff; font: 500 17px/21px "Liberation Sans", sans-serif; text-align: center; }
.cal-day { color: #222; font: 300 50px/50px Inter, sans-serif; }
.contacts { background: #a9854f; }
.reminders { background: #fff; }
.notes { background: #f1efea; }
.tv { background: linear-gradient(180deg, #263530, #0e1413); display: flex; align-items: center; justify-content: center; color: #f2f2f2; font: 500 33px "Liberation Sans", sans-serif; gap: 0; }
.tv .tv-apple { width: 28px; height: 30px; fill: #f2f2f2; flex: none; }
.music { background: linear-gradient(180deg, #ef7182, #ec3a44); }
.podcasts { background: linear-gradient(180deg, #b566e6, #6f35ae); }
.keynote { background: #fff; }
.numbers { background: #fff; }
.pages { background: #fff; }
.appstore { background: linear-gradient(180deg, #3fa8ec, #2067d8); }
.sysprefs { background: linear-gradient(180deg, #c6c8ca, #8b8d90); }
.badge { position: absolute; left: 50px; top: -9px; width: 30px; height: 30px; border-radius: 50%; background: #e5483c; color: #fff; font: 400 18px/30px Inter, sans-serif; text-align: center; }
.terminal { background: linear-gradient(180deg, #bcc6cc, #8a8a8a); }
.stickies { background: #fcec98; }
.mysql { width: 85px; height: 86px; margin: -8px -7px 0; border-radius: 14px; background: linear-gradient(180deg, #3a6a96, #254a68); overflow: hidden; }
.bbedit { width: 78px; height: 78px; margin: -4px -4px 0; }
.bb-letter { font: 700 50px "Liberation Serif", serif; fill: #0b1050; }
.swift { background: #fff; }
.postman { background: #f0744a; }
.spring { width: 86px; height: 88px; margin: -9px -8px 0; }
.doc { width: 56px; height: 75px; margin-top: -1px; }
.trash { width: 62px; height: 78px; margin-top: -4px; }
```
